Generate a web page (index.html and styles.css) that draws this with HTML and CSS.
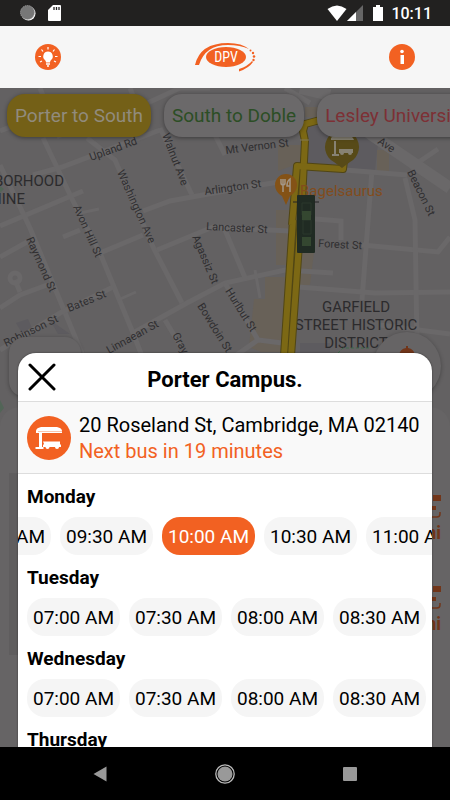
FILE: index.html
```
<!DOCTYPE html>
<html lang="en">
<head>
  <meta charset="UTF-8">
  <meta name="viewport" content="width=device-width, initial-scale=1.0">
  <title>DPV - Porter Campus</title>
  <link rel="stylesheet" href="styles.css">
</head>
<body>
  <div class="status-bar">
    <svg width="16" height="16" viewBox="0 0 16 16">
      <circle cx="8.500" cy="8.500" r="7" fill="#fff"/>
      <circle cx="7.500" cy="7.500" r="7" fill="#777" stroke="#aaa" stroke-dasharray="1 1"/>
    </svg>
    <svg width="13" height="16" viewBox="0 0 13 16">
      <path d="M5 0h7a1 1 0 0 1 1 1v14a1 1 0 0 1-1 1H1a1 1 0 0 1-1-1V5z" fill="#fff"/>
      <path d="M6 2v3M8.500 2v3M11 2v3" stroke="#222" stroke-width="1.300"/>
    </svg>
    <span class="spacer"></span>
    <svg width="20" height="16" viewBox="0 0 20 16"><path d="M10 16L.5 4Q10-3 19.500 4z" fill="#fff"/></svg>
    <svg width="16" height="16" viewBox="0 0 16 16">
      <path d="M16 0v16H0z" fill="#666"/>
      <path d="M9 7v9H0z" fill="#fff"/>
    </svg>
    <svg class="battery" width="10" height="16" viewBox="0 0 10 16"><path d="M3 0h4v2h3v14H0V2h3z" fill="#fff"/></svg>
    <span class="clock">10:11</span>
  </div>

  <header class="header">
    <button class="icon-button" aria-label="Tips">
      <svg width="26" height="26" viewBox="0 0 26 26">
        <circle cx="13" cy="13" r="13" fill="#f26122"/>
        <path d="M13 7.500a4.800 4.800 0 0 0-3 8.500q1 1 1 2.500h4q0-1.500 1-2.500a4.800 4.800 0 0 0-3-8.500z" fill="#fff"/>
        <path d="M11 20h4M12 22h2" stroke="#fff" stroke-width="1.500"/>
        <path d="M13 3v2.500M6.500 5.500l1.500 2M19.500 5.500l-1.500 2M3.500 12.500H6M20 12.500h2.500M5 18l2-1M21 18l-2-1" stroke="#fff" stroke-width="1.200"/>
      </svg>
    </button>
    <svg width="62" height="32" viewBox="0 0 62 32" role="img" aria-label="DPV">
      <path d="M1 24Q6 2 34 2Q48 2 55 8Q46 4 34 4Q11 4 5 24z" fill="#f26122"/>
      <circle cx="56.500" cy="9.500" r="1" fill="#f26122"/>
      <circle cx="59" cy="12" r="1.200" fill="#f26122"/>
      <circle cx="60" cy="15.500" r="1.300" fill="#f26122"/>
      <circle cx="59.500" cy="19" r="1.200" fill="#f26122"/>
      <path d="M58 20Q54 25 45 28L45 30.500Q55 27 59 21z" fill="#f26122"/>
      <ellipse cx="32" cy="16" rx="20" ry="10" fill="#f26122"/>
      <text class="logo-text" x="32" y="21" text-anchor="middle">DPV</text>
    </svg>
    <button class="icon-button" aria-label="Information">
      <svg width="26" height="26" viewBox="0 0 26 26">
        <circle cx="13" cy="13" r="13" fill="#f26122"/>
        <circle cx="13" cy="7.500" r="1.800" fill="#fff"/>
        <path d="M11.500 11h3.500v9h-3.500z" fill="#fff"/>
      </svg>
    </button>
  </header>

  <main class="screen">
    <svg class="map" viewBox="0 88 450 659" preserveAspectRatio="xMidYMin slice">
      <path class="block" d="M305 126L380 125L375 170L300 165z"/>
      <path class="shops" d="M305 107h14v10h-14zM278 145h22v18l-22 8zM377 150h12v22h-12zM276 210h18v55h-18zM265 277h25l-4 75h-25l-12-5 5-48h11zM300 252h14l-4 33h-12z"/>
      <path class="block" d="M16 323l12-4 4 9-10 5zM50 320l8 14h12zM300 343h30v12h-30z"/>
      <g class="roads">
        <path d="M0 131L60 108M100 125L180 88L210 88M0 226L83 191M33 175L62 167L160 130"/>
        <path d="M40 88L60 138M43 138L73 201L100 253L133 333L142 356M0 165L30 228L83 356"/>
        <path d="M87 138L115 160L153 247L182 303M130 88L138 108M160 128L192 195M210 125L225 155"/>
        <path d="M143 211L170 201L225 191L290 180M157 250L213 227L290 231M100 253L143 235M63 237L80 230"/>
        <path d="M133 333L187 303L225 283L285 270L333 273M0 350L60 313L113 287M0 308L20 295L47 285"/>
        <path d="M0 257L27 242M20 292L15 280M225 230L246 280M225 283L258 340L282 343M258 340L235 356M165 320L180 345"/>
        <path d="M362 245L438 252L450 237M298 287L375 293L450 292M372 170L362 300M315 219L341 221V240M380 325L450 334"/>
        <path d="M345 170L407 175M405 178L415 220L417 345M438 149L410 168M285 88L310 103"/>
        <path class="wide" d="M350 118L372 135L450 188M300 88L330 95"/>
        <path class="thin" d="M118 300L136 292M80 213L99 209M255 270L260 298"/>
        <circle cx="15" cy="278" r="5"/>
      </g>
      <path class="green" d="M0 186l4 3-4 4zM0 400l4 8-4 5z"/>

      <g class="streets">
        <text transform="translate(91 161) rotate(-20)">Upland Rd</text>
        <text transform="translate(162 135) rotate(69)">Walnut Ave</text>
        <text transform="translate(117 172) rotate(66)">Washington Ave</text>
        <text transform="translate(73 207) rotate(66)">Avon Hill St</text>
        <text transform="translate(26 239) rotate(66)">Raymond St</text>
        <text transform="translate(192 237) rotate(67)">Agassiz St</text>
        <text transform="translate(197 306) rotate(58)">Bowdoin St</text>
        <text transform="translate(225 291) rotate(58)">Hurlbut St</text>
        <text transform="translate(172 335) rotate(62)">Gray St</text>
        <text transform="translate(69 312) rotate(-22)">Bates St</text>
        <text transform="translate(6 347) rotate(-26)">Robinson St</text>
        <text transform="translate(109 354) rotate(-29)">Linnaean St</text>
        <text transform="translate(205 195) rotate(-8)">Arlington St</text>
        <text transform="translate(206 230) rotate(3)">Lancaster St</text>
        <text transform="translate(226 154) rotate(-7)">Mt Vernon St</text>
        <text transform="translate(318 247) rotate(3)">Forest St</text>
        <text transform="translate(377 143) rotate(34)">Ave</text>
        <text transform="translate(407 172) rotate(64)">Beacon St</text>
      </g>
      <g class="areas">
        <text x="64" y="186" text-anchor="end">NEIGHBORHOOD</text>
        <text x="25" y="204" text-anchor="end">NINE</text>
        <text x="356" y="312" text-anchor="middle">GARFIELD</text>
        <text x="356" y="330" text-anchor="middle">STREET HISTORIC</text>
        <text x="356" y="348" text-anchor="middle">DISTRICT</text>
      </g>
      <path d="M338 353l5-5h26" fill="none" stroke="#3d6b4b" stroke-dasharray="3 2"/>

      <g class="route-edge">
        <path d="M320 120L305 124L303 131L305 141L302 200L300 230L291 356"/>
        <path d="M292 225L297 166L343 169L344 160M293 220L284 356"/>
      </g>
      <g class="route">
        <path d="M320 120L305 124L303 131L305 141L302 200L300 230L291 356"/>
        <path d="M292 225L297 166L343 169L344 160M293 220L284 356"/>
      </g>
      <path d="M300 140h9" stroke="#817955"/>

      <path d="M342 168l-8-6a17 17 0 1 1 16 0z" fill="#574a18"/>
      <g transform="translate(342 146)" fill="#878273">
        <path d="M-11-8q2-3 5-3h12q3 0 5 3l1 2h-23zM-8-5h2v14h-2zM-10 8h7v2h-7zM-3 3h14v4h-14z"/>
        <circle cx="0" cy="7" r="2"/>
        <circle cx="8" cy="7" r="2"/>
      </g>
      <path d="M286 205l-4-9q-7-4-7-11a11 11 0 0 1 22 0q0 7-7 11z" fill="#845216"/>
      <path d="M281 179v4q0 2 2 2v7M283 179v6M285 179v4q0 2-2 2M290 192v-13q-3 2-3 7h3" fill="none" stroke="#a39687" stroke-width="1.500"/>
      <text class="place" x="300" y="196">Bagelsaurus</text>
      <rect x="297" y="195" width="18" height="58" rx="1" fill="#202b23"/>
      <path d="M293 202h5M314 202h5" stroke="#222"/>
      <path d="M302 203h9v12h-9zM303 220h8v14h-8z" fill="none" stroke="#2a382c"/>
      <path d="M302 211h9v9h-9zM302 237h9v9h-9z" fill="#344730"/>
    </svg>

    <nav class="routes">
      <button class="route-chip selected">Porter to South</button>
      <button class="route-chip green-text">South to Doble</button>
      <button class="route-chip red-text">Lesley University</button>
    </nav>

    <div class="map-controls">
      <span class="map-card"></span>
      <span class="locate">
        <svg width="18" height="18" viewBox="0 0 18 18"><path d="M8 0h2v2q6 1 7 7H1q1-6 7-7z" fill="#713519"/></svg>
      </span>
    </div>
    <section class="stops">
      <div class="stops-list">
        <div class="stop-distance">
          <svg width="9" height="24" viewBox="0 0 9 24"><path d="M1 0h8v6H1zM0 11h4v4H0z" fill="#713519"/><path d="M8 17v2q0 3-3 3H0" fill="none" stroke="#713519" stroke-width="1.500"/></svg>
          <span>mi</span>
        </div>
        <div class="stop-distance">
          <svg width="9" height="24" viewBox="0 0 9 24"><path d="M1 0h8v6H1zM0 11h4v4H0z" fill="#713519"/><path d="M8 17v2q0 3-3 3H0" fill="none" stroke="#713519" stroke-width="1.500"/></svg>
          <span>mi</span>
        </div>
      </div>
    </section>

    <div class="overlay">
      <section class="sheet">
        <div class="sheet-header">
          <button class="close" aria-label="Close">
            <svg width="28" height="28" viewBox="0 0 28 28"><path d="M2 2l24 24M26 2L2 26" stroke="#000" stroke-width="3" stroke-linecap="round"/></svg>
          </button>
          <h1>Porter Campus.</h1>
        </div>
        <div class="stop-info">
          <svg width="44" height="44" viewBox="0 0 44 44">
            <circle cx="22" cy="22" r="22" fill="#f26122"/>
            <path d="M9 15q0-3 5-4h16q5 1 5 4v2H9z" fill="#fff"/>
            <path d="M12 17h3v14h-3zM8.500 31h8v2h-8z" fill="#fff"/>
            <path d="M16 25.500h17v2.500l1 1v2H16v-2l1-1z" fill="#fff"/>
            <circle cx="20.500" cy="31" r="2" fill="#fff"/>
            <circle cx="30" cy="31" r="2" fill="#fff"/>
            <path d="M11 15.500h24" stroke="#f9c6ae"/>
          </svg>
          <div>
            <p>20 Roseland St, Cambridge, MA 02140</p>
            <p class="next-bus">Next bus in 19 minutes</p>
          </div>
        </div>
        <div class="schedule">
          <h2>Monday</h2>
          <div class="times">
            <button>07:00 AM</button>
            <button>07:30 AM</button>
            <button>08:00 AM</button>
            <button>08:30 AM</button>
            <button>09:00 AM</button>
            <button>09:30 AM</button>
            <button class="current">10:00 AM</button>
            <button>10:30 AM</button>
            <button>11:00 AM</button>
            <button>11:30 AM</button>
          </div>
          <h2>Tuesday</h2>
          <div class="times">
            <button>07:00 AM</button>
            <button>07:30 AM</button>
            <button>08:00 AM</button>
            <button>08:30 AM</button>
          </div>
          <h2>Wednesday</h2>
          <div class="times">
            <button>07:00 AM</button>
            <button>07:30 AM</button>
            <button>08:00 AM</button>
            <button>08:30 AM</button>
          </div>
          <h2>Thursday</h2>
        </div>
      </section>
    </div>
  </main>

  <footer class="nav-bar">
    <button aria-label="Back"><svg width="14" height="16" viewBox="0 0 14 16"><path d="M13.500.5v15L.5 8z" fill="#999"/></svg></button>
    <button aria-label="Home"><svg width="20" height="20" viewBox="0 0 20 20"><circle cx="10" cy="10" r="9.200" fill="none" stroke="#bbb" stroke-width="1.300"/><circle cx="10" cy="10" r="7.500" fill="#999"/></svg></button>
    <button aria-label="Recent apps"><svg width="14" height="14" viewBox="0 0 14 14"><rect width="14" height="14" rx="1" fill="#999"/></svg></button>
  </footer>

  <script>
    // Bring the current departure into view
    const current = document.querySelector('.current');
    const row = current.parentElement;
    row.scrollLeft = current.getBoundingClientRect().left - row.getBoundingClientRect().left - 144;
  </script>
</body>
</html>
```
FILE: styles.css
```
* {
  box-sizing: border-box;
}

body {
  margin: 0;
  height: 100vh;
  display: flex;
  flex-direction: column;
  overflow: hidden;
  font-family: Roboto, 'Liberation Sans', sans-serif;
  color: #000;
}

button {
  border: none;
  padding: 0;
  background: none;
  font-family: inherit;
  color: inherit;
  cursor: pointer;
}

svg {
  display: block;
  flex: none;
}

.status-bar {
  display: flex;
  align-items: center;
  flex: none;
  height: 26px;
  padding: 0 18px 0 20px;
  background: #222120;
  color: #fff;
}

.status-bar svg:nth-child(2) {
  margin-left: 12px;
}

.spacer {
  flex: 1;
}

.battery {
  margin: 0 8px 0 10px;
}

.clock {
  font-size: 16px;
  font-weight: 500;
}

.header {
  display: flex;
  align-items: center;
  justify-content: space-between;
  flex: none;
  height: 62px;
  padding: 0 35px;
  background: #f6f6f6;
}

.icon-button {
  border-radius: 50%;
}

.logo-text {
  font-family: 'Roboto Condensed', Roboto, sans-serif;
  font-size: 14px;
  fill: #fff;
}

.screen {
  position: relative;
  flex: 1;
  min-height: 0;
  display: flex;
  flex-direction: column;
  overflow: hidden;
  background: #636162;
}

.map {
  position: absolute;
  top: 0;
  left: 0;
  width: 100%;
  height: 100%;
}

.block {
  fill: #5d5b5f;
}

.shops {
  fill: #686158;
}

.roads path,
.roads circle {
  fill: none;
  stroke: #6a6869;
  stroke-width: 5;
}

.roads .wide {
  stroke-width: 12;
}

.roads .thin {
  stroke-width: 3;
}

.green {
  fill: #526557;
}

.streets {
  font-size: 11px;
  fill: #2f2e30;
}

.areas {
  font-size: 15px;
  fill: #2c2b2d;
}

.place {
  font-size: 15px;
  fill: #824c1c;
}

.route-edge path {
  fill: none;
  stroke: #514614;
  stroke-width: 8;
  stroke-linejoin: round;
}

.route path {
  fill: none;
  stroke: #7c6814;
  stroke-width: 6;
  stroke-linejoin: round;
}

.routes {
  position: relative;
  display: flex;
  gap: 13px;
  padding: 6px 7px;
  overflow: hidden;
}

.route-chip {
  flex: none;
  height: 43px;
  padding: 0 8px;
  border-radius: 18px;
  background: #6b696a;
  box-shadow: 0 1px 4px rgba(0, 0, 0, 0.4);
  font-size: 19px;
}

.route-chip.selected {
  background: #746017;
  color: #918b7d;
}

.green-text {
  color: #2c4e25;
}

.red-text {
  color: #7d3035;
}

.map-controls {
  position: relative;
  display: flex;
  justify-content: space-between;
  margin-top: auto;
  padding: 0 9px;
}

.map-card {
  width: 72px;
  height: 60px;
  margin-top: 5px;
  border-radius: 16px;
  background: #666465;
  box-shadow: 0 1px 4px rgba(0, 0, 0, 0.3);
}

.locate {
  display: flex;
  justify-content: center;
  width: 68px;
  height: 68px;
  padding-top: 14px;
  border-radius: 50%;
  background: #666465;
  box-shadow: 0 1px 4px rgba(0, 0, 0, 0.3);
}

.stops {
  position: relative;
  height: 340px;
  margin-top: 7px;
  padding-top: 66px;
  border-radius: 20px 20px 0 0;
  background: #666465;
}

.stops-list {
  height: 182px;
  margin-right: 9px;
  margin-left: 9px;
  padding-top: 22px;
  background: linear-gradient(to right, #5f5d5e 50%, transparent 50%);
}

.stop-distance {
  display: flex;
  flex-direction: column;
  align-items: flex-end;
  height: 91px;
  color: #713519;
  font-size: 18px;
  font-weight: bold;
}

.stop-distance span {
  margin-top: 3px;
}

.overlay {
  position: absolute;
  inset: 0;
  padding: 265px 18px 0;
}

.sheet {
  height: 100%;
  overflow: hidden;
  border-radius: 18px 18px 0 0;
  background: #fff;
  box-shadow: 0 0 2px rgba(0, 0, 0, 0.5);
}

.sheet-header {
  display: grid;
  grid-template-columns: 28px 1fr 28px;
  align-items: center;
  height: 49px;
  padding: 0 10px;
  border-bottom: 1px solid #ddd;
}

.sheet-header h1 {
  margin: 0;
  padding-top: 4px;
  font-size: 22px;
  text-align: center;
}

.stop-info {
  display: flex;
  align-items: center;
  gap: 8px;
  height: 72px;
  padding: 0 9px;
  border-bottom: 1px solid #ddd;
  background: #f9f9f9;
}

.stop-info p {
  margin: 0;
  font-size: 20px;
  line-height: 26px;
  white-space: nowrap;
}

.stop-info .next-bus {
  color: #f26122;
}

.schedule {
  padding-top: 8px;
}

.schedule h2 {
  margin: 0 9px;
  font-size: 19px;
  line-height: 29px;
}

.times {
  display: flex;
  gap: 9px;
  margin: 6px 0 8px;
  padding: 0 9px;
  overflow: hidden;
}

.times button {
  flex: none;
  width: 93px;
  height: 38px;
  border-radius: 18px;
  background: #f5f5f5;
  font-size: 19px;
}

.times .current {
  background: #f26122;
  color: #fff;
}

.nav-bar {
  display: flex;
  justify-content: space-around;
  align-items: center;
  flex: none;
  height: 53px;
  padding: 0 38px;
  background: #000;
}

.nav-bar button {
  width: 48px;
  height: 48px;
  display: grid;
  place-items: center;
}
```
